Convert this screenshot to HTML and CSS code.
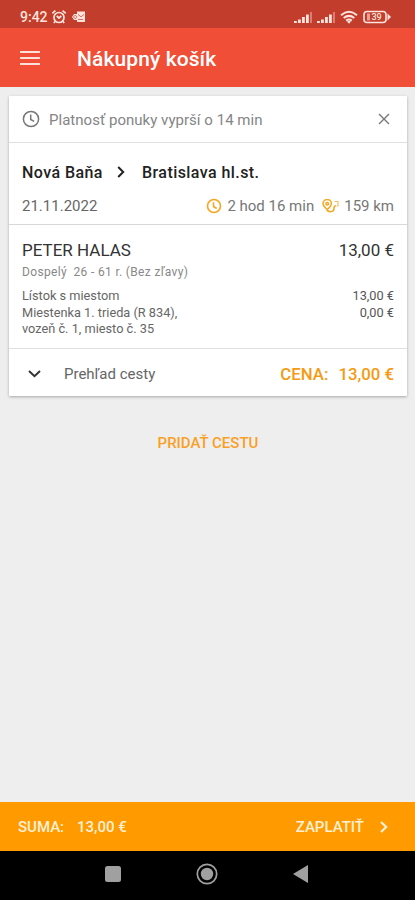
FILE: index.html
```html
<!DOCTYPE html>
<html lang="sk">
<head>
<meta charset="utf-8">
<title>Nákupný košík</title>
<link rel="stylesheet" href="styles.css">
</head>
<body>
<div class="screen">
  <div class="status">
    <span class="clock">9:42</span>
    <svg class="alarm" width="16" height="16" viewBox="0 0 16 16" fill="none" stroke="currentColor" stroke-width="1.700"><circle cx="8" cy="8.500" r="5"/><path d="M1.300 4.400 4.400 1.700M14.700 4.400 11.600 1.700M4.300 12.300 2.800 14M11.700 12.300l1.500 1.700M5.700 7l2.300 2 2.300-2"/></svg>
    <svg class="mail" width="14" height="12" viewBox="0 0 14 12"><path fill="currentColor" d="M5 .5h8v10.500H5V9H2L0 6l2-3h3z"/><path fill="none" stroke="#c23d2c" stroke-width=".7" d="M6 3.500l3 2.300 3-2.300M3.200 4.500a1.500 1.500 0 1 0 .1 0M6 8.500h5"/></svg>
    <div class="system">
      <svg width="19" height="13" viewBox="0 0 19 13" fill="currentColor"><path d="M0 10h2.800v2H0zM4 8.500h2.800V12H4zM8 6h2.800v6H8zM12 3.500h2.800V12H12z"/><path opacity=".4" d="M16 1h2v11h-2z"/></svg>
      <svg width="19" height="13" viewBox="0 0 19 13" fill="currentColor"><path d="M0 10h2.800v2H0zM4 8.500h2.800V12H4zM8 6h2.800v6H8zM12 3.500h2.800V12H12z"/><path opacity=".4" d="M16 1h2v11h-2z"/></svg>
      <svg width="18" height="14" viewBox="0 0 18 14" fill="none" stroke="currentColor" stroke-width="2"><path d="M1 5.200Q9-1.700 17 5.200M3.700 8Q9 3.700 14.300 8M6.200 10.600Q9 8.500 11.800 10.600"/><path fill="currentColor" stroke="none" d="M7 11.500q2-1.500 4 0L9 13.800z"/></svg>
      <div class="battery"><span>39</span><svg width="28" height="14" viewBox="0 0 28 14" fill="none" stroke="currentColor"><rect x="1" y="1.500" width="22" height="11" rx="3" stroke-width="1.600"/><path fill="currentColor" stroke="none" d="M4 3.500h3v7H4z" opacity=".6"/><path fill="currentColor" stroke="none" d="M24.500 3.500 28 7l-3.500 3.500z"/></svg></div>
    </div>
  </div>
  <header class="appbar">
    <svg width="20" height="14" viewBox="0 0 20 14" stroke="currentColor" stroke-width="2"><path d="M0 1h20M0 7h20M0 13h20"/></svg>
    <h1>Nákupný košík</h1>
  </header>
  <main>
    <section class="card">
      <div class="notice">
        <svg width="18" height="18" viewBox="0 0 18 18" fill="none" stroke="currentColor" stroke-width="1.500"><circle cx="9" cy="9" r="7.600"/><path d="M8.700 4.500v5l3.400 1.800"/></svg>
        <span class="notice-text">Platnosť ponuky vyprší o 14 min</span>
        <svg class="close" width="12" height="12" viewBox="0 0 12 12" fill="none" stroke="currentColor" stroke-width="1.400"><path d="m1 1 10 10M11 1 1 11"/></svg>
      </div>
      <div class="trip">
        <div class="route">
          <span class="from">Nová Baňa</span>
          <svg width="8" height="12" viewBox="0 0 8 12" fill="none" stroke="currentColor" stroke-width="2"><path d="m1.200 1 5 5-5 5"/></svg>
          <span class="to">Bratislava hl.st.</span>
        </div>
        <div class="facts">
          <span class="date">21.11.2022</span>
          <svg class="gold" width="16" height="16" viewBox="0 0 16 16" fill="none" stroke="currentColor" stroke-width="1.600"><circle cx="8" cy="8" r="6.500"/><path d="M7.500 4.300v4.200l3.200 2"/></svg>
          <span class="duration">2 hod 16 min</span>
          <svg class="gold" width="18" height="15" viewBox="0 0 18 15" fill="none" stroke="currentColor" stroke-width="1.500"><path d="M5.300 10.500C2.500 8 1 6.300 1 4.700a4.200 4.200 0 0 1 8.400 0c0 1.600-1.300 3.300-4.100 5.800zM4.500 10.500c2 3.200 7.500 2.800 7.500-1 0-2 .2-2.800 1.800-3.100"/><circle cx="5.200" cy="4.700" r="1.300"/><path d="M12.500 2.500H16V7h-1.500" stroke-width="1.200" opacity=".7"/></svg>
          <span class="distance">159 km</span>
        </div>
      </div>
      <div class="passenger">
        <div class="line name"><span>PETER HALAS</span><span>13,00 €</span></div>
        <div class="line type"><span>Dospelý&nbsp; 26 - 61 r. (Bez zľavy)</span></div>
        <div class="line item"><span>Lístok s miestom</span><span class="amount">13,00 €</span></div>
        <div class="line item"><span>Miestenka 1. trieda (R 834),</span><span class="amount">0,00 €</span></div>
        <div class="line item last"><span>vozeň č. 1, miesto č. 35</span></div>
      </div>
      <div class="summary">
        <svg width="13" height="8" viewBox="0 0 13 8" fill="none" stroke="currentColor" stroke-width="2"><path d="m1 1 5.500 5.200L12 1"/></svg>
        <span class="overview">Prehľad cesty</span>
        <span class="price"><span>CENA:</span><span>13,00 €</span></span>
      </div>
    </section>
    <div class="add"><span>PRIDAŤ CESTU</span></div>
  </main>
  <footer class="pay">
    <span class="sum">SUMA:</span><span class="sum-value">13,00 €</span>
    <span class="pay-label">ZAPLATIŤ</span>
    <svg width="8" height="12" viewBox="0 0 8 12" fill="none" stroke="currentColor" stroke-width="2.200"><path d="m1 1 5.200 5L1 11"/></svg>
  </footer>
  <nav class="system-nav">
    <svg width="16" height="16" viewBox="0 0 16 16"><rect width="16" height="16" rx="2.500" fill="currentColor"/></svg>
    <svg width="22" height="22" viewBox="0 0 22 22"><circle cx="11" cy="11" r="9.700" fill="none" stroke="currentColor" stroke-width="1.700"/><circle cx="11" cy="11" r="6.200" fill="currentColor"/></svg>
    <svg width="15" height="18" viewBox="0 0 15 18"><path d="M15 0v18L0 9z" fill="currentColor"/></svg>
  </nav>
</div>
</body>
</html>
```
FILE: styles.css
```css
* { box-sizing: border-box; }
body { margin: 0; background: #eee; font-family: Roboto, sans-serif; }
.screen { width: 415px; height: 900px; display: flex; flex-direction: column; white-space: nowrap; }
svg { display: block; flex: none; }
.status { height: 28px; padding: 6px 24px 0 20px; background: #c23d2c; color: #ffe3dc; display: flex; align-items: center; }
.clock { font-size: 14px; font-weight: 500; width: 31px; }
.mail { margin-left: 5px; }
.system { margin-left: auto; display: flex; align-items: center; gap: 4px; }
.battery { display: grid; place-items: center; margin-left: 1px; }
.battery > * { grid-area: 1 / 1; }
.battery span { font-size: 9px; font-weight: 500; padding-right: 1px; }
.appbar { height: 59px; background: #f04e36; color: #fff; display: flex; align-items: center; padding: 2px 20px 0; }
.appbar svg { color: #ffe0d8; margin-top: -2px; }
h1 { margin: 0 0 0 37px; font-size: 21px; font-weight: 500; line-height: 24px; letter-spacing: .1px; }
main { flex: 1; padding: 9px 8px 0 9px; }
.card { height: 300px; background: #fff; box-shadow: 0 1px 3px rgba(0,0,0,.3); border-radius: 1px; }
.notice { height: 47px; padding: 0 17px 0 13px; display: flex; align-items: center; color: #777; border-bottom: 1px solid #e0e0e0; }
.notice-text { margin: 2px 0 0 9px; font-size: 15px; letter-spacing: .03px; color: #858585; }
.close { margin-left: auto; }
.trip { height: 82px; padding: 17px 13px 0; border-bottom: 1px solid #d8d8d8; }
.route { display: flex; align-items: center; height: 24px; font-size: 16px; font-weight: 500; letter-spacing: .43px; color: #222; }
.from { width: 95px; }
.to { margin-left: 17px; }
.facts { display: flex; align-items: center; height: 24px; margin-top: 10px; font-size: 15px; color: #777; }
.date { margin-right: auto; color: #666; }
.gold { color: #f5a623; }
.duration { margin: 0 8px 0 5px; }
.distance { margin-left: 4px; }
.passenger { height: 124px; padding: 14px 13px 0; border-bottom: 1px solid #e0e0e0; color: #666; }
.line { display: flex; justify-content: space-between; align-items: center; }
.name { height: 22px; font-size: 17px; color: #333; }
.type { height: 22px; font-size: 12px; letter-spacing: .33px; color: #888; }
.item { height: 17px; font-size: 12.75px; margin-top: 4px; }
.item + .item { margin-top: 0; }
.item.last { height: 14px; }
.amount { color: #555; }
.summary { height: 47px; padding: 2px 13px 0 19px; display: flex; align-items: center; color: #333; }
.overview { margin-left: 23px; font-size: 15px; color: #666; }
.price { margin-left: auto; display: flex; gap: 10px; color: #f59a12; font-size: 16.8px; font-weight: 500; }
.add { margin-top: 37px; height: 20px; line-height: 20px; text-align: center; font-size: 15px; font-weight: 500; color: #fa9f25; }
.pay { height: 49px; background: #ff9a00; color: #fff1d6; display: flex; align-items: center; padding: 0 27px 0 18px; font-size: 15px; font-weight: 500; }
.sum { width: 59px; }
.pay-label { margin-left: auto; margin-right: 16px; }
.system-nav { height: 49px; background: #000; color: #a0a0a0; display: flex; align-items: center; justify-content: space-between; padding: 0 107px 3px 105px; }
```
